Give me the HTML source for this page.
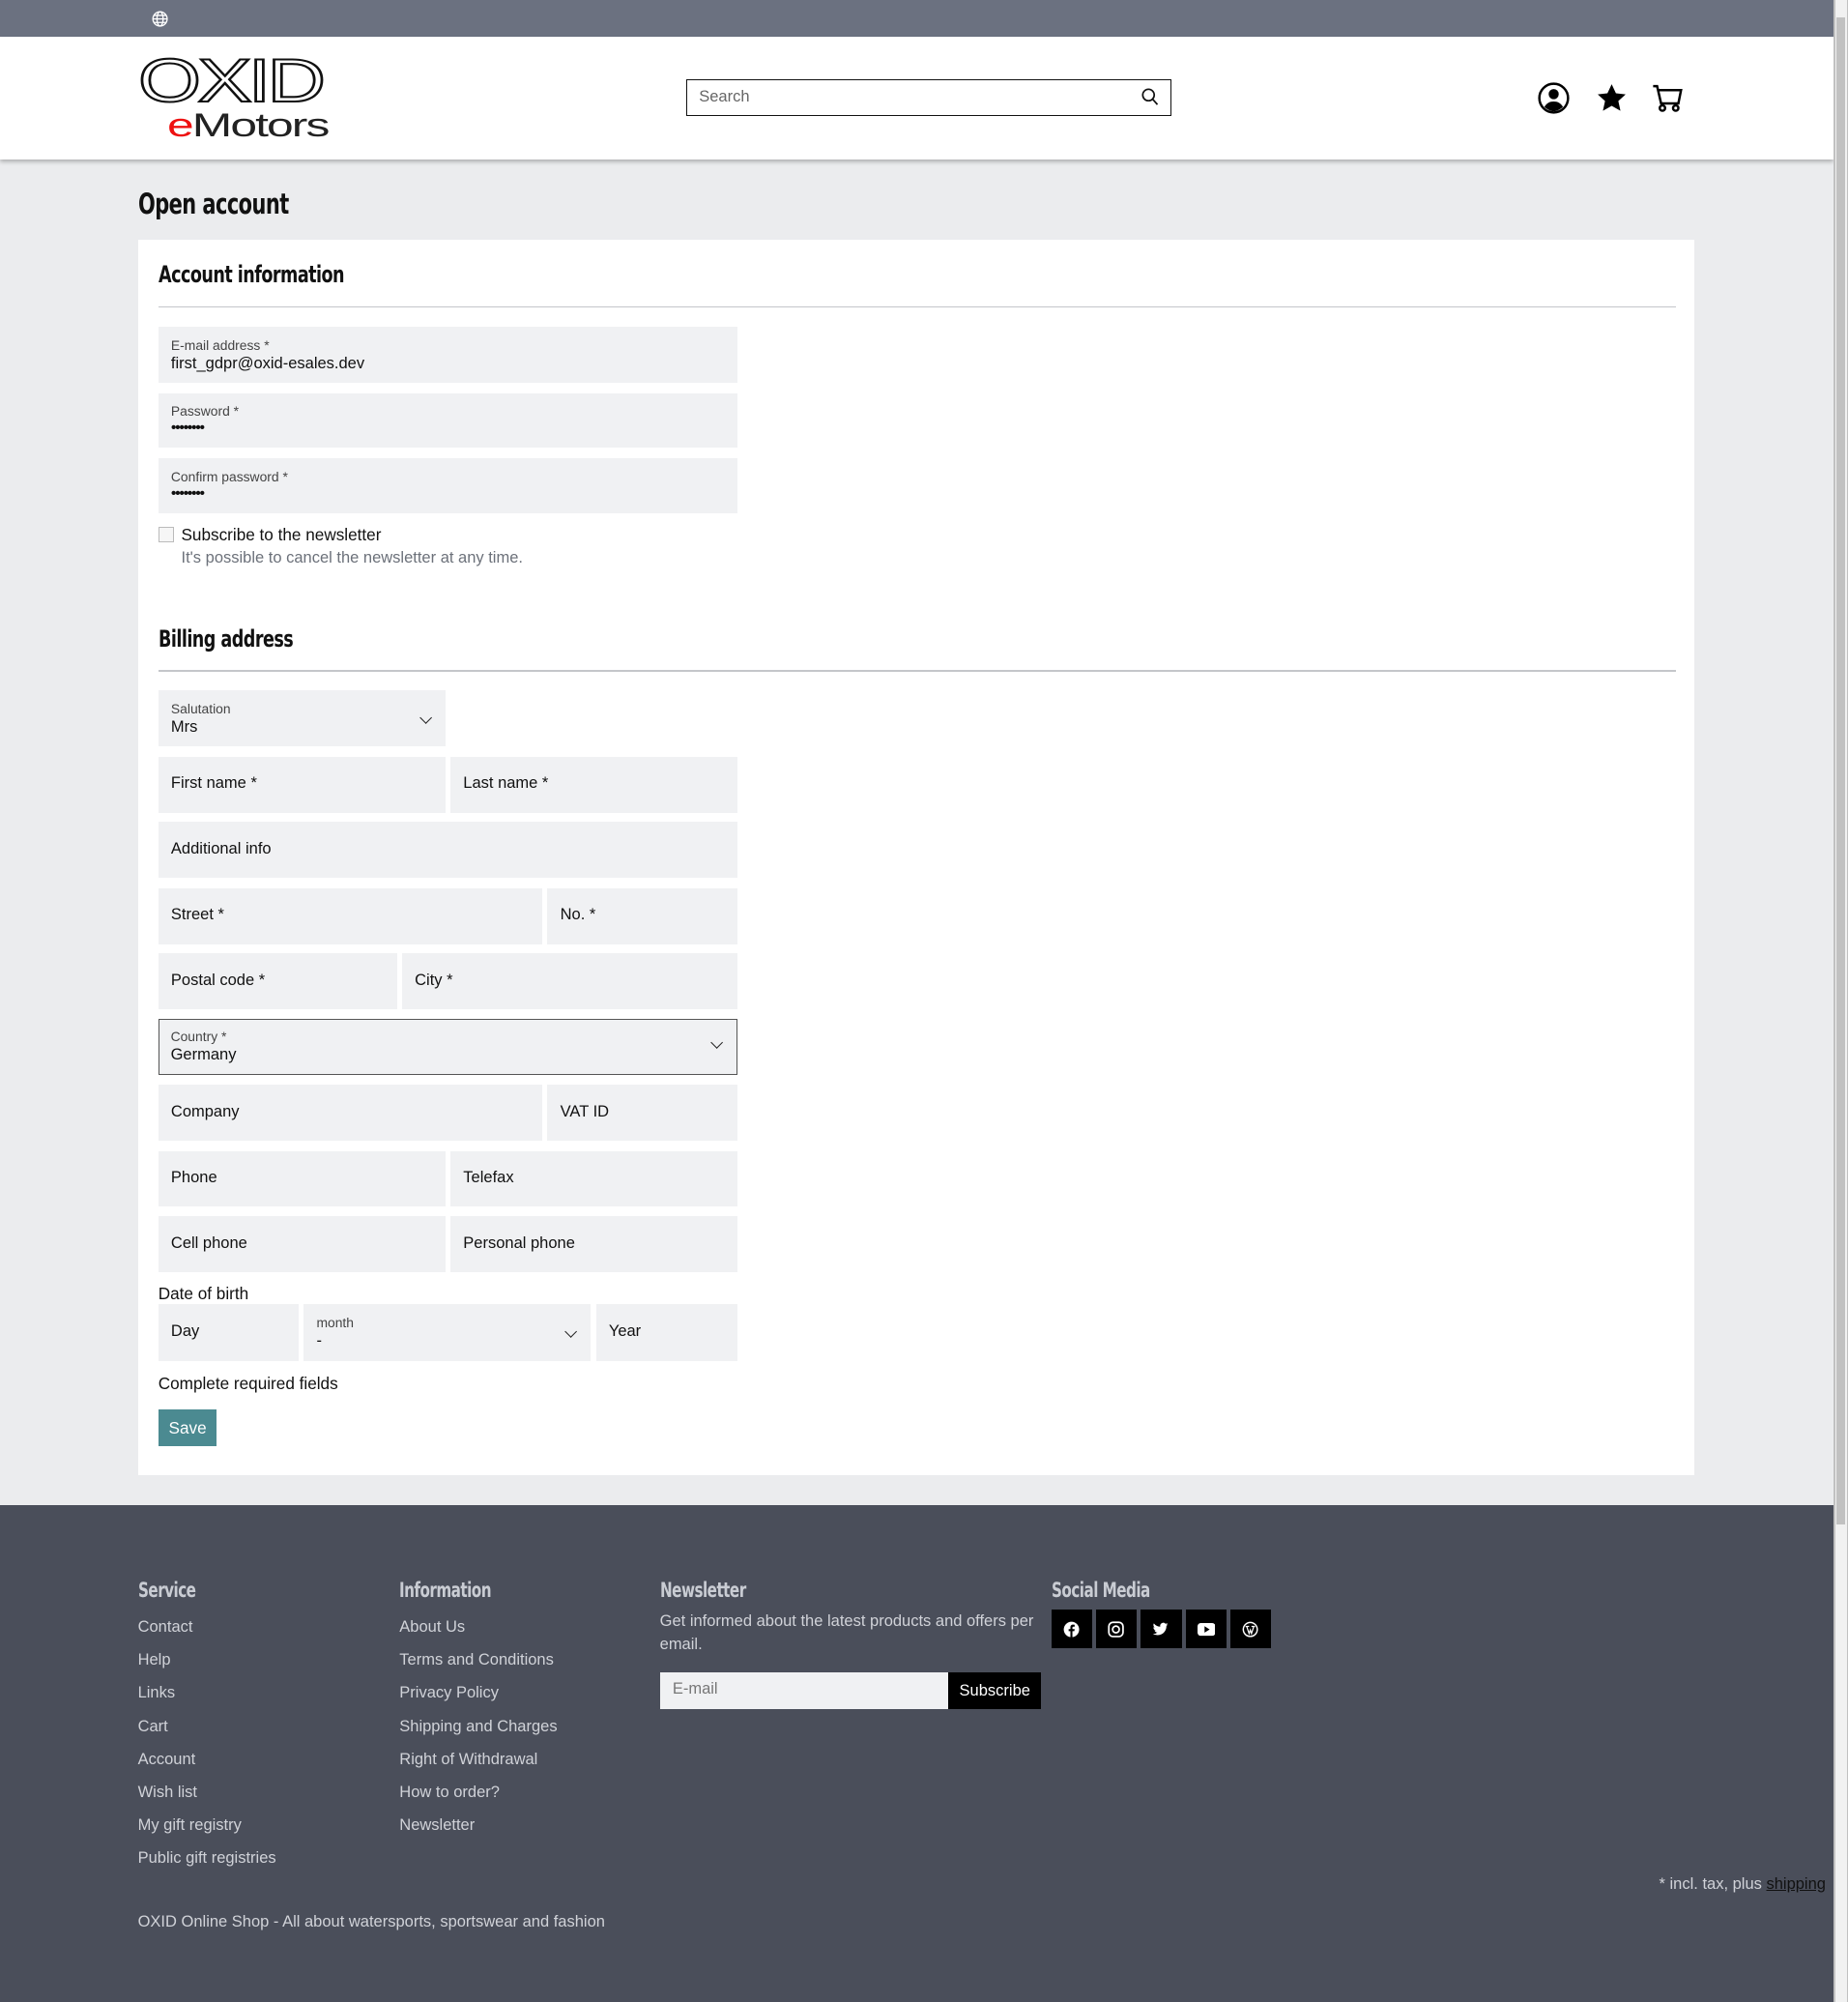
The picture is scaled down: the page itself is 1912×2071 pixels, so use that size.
<!DOCTYPE html>
<html><head><meta charset="utf-8">
<style>
*{box-sizing:border-box;margin:0;padding:0}
html,body{width:1912px;height:2071px;overflow:hidden;background:#4a4e5a}
#w{zoom:1.3204;width:1448px;height:1569px;position:relative;font-family:"Liberation Sans",sans-serif;font-size:13px;color:#111;background:#ebecee}
.a{position:absolute}
.h{font-family:"DejaVu Sans Condensed","Liberation Sans Narrow","Liberation Sans",sans-serif;font-weight:bold;letter-spacing:-0.5px;transform:scaleX(0.8);transform-origin:left;white-space:nowrap}
.f{position:absolute;background:#f0f1f3;}
.f .l{position:absolute;left:10px;top:8px;font-size:10.5px;color:#444}
.f .v{position:absolute;left:10px;top:22px;font-size:12.5px;color:#111}
.f .d{position:absolute;left:10px;top:21px;font-size:12px;color:#111;letter-spacing:-1px}
.f .p{position:absolute;left:10px;top:14px;font-size:12.5px;color:#111}
.chev{position:absolute;right:12px;top:18px;width:7px;height:7px;border-right:1.3px solid #222;border-bottom:1.3px solid #222;transform:rotate(45deg)}
.ft{color:#d0d2d8;font-size:12.5px}
.fh{color:#c9ccd3;font-size:16px}
.soc{position:absolute;top:1261px;width:32px;height:30px;background:#000}
</style></head><body><div id="w">
<div class="a" style="left:0;top:0;width:1448px;height:29px;background:#6b7180"></div>
<svg class="a" style="left:119px;top:8px" width="13" height="13" viewBox="0 0 14 14" fill="none" stroke="#fff" stroke-width="1.1"><circle cx="7" cy="7" r="6"/><ellipse cx="7" cy="7" rx="2.6" ry="6"/><path d="M1 7h12M2 4h10M2 10h10"/></svg>
<div class="a" style="left:0;top:29px;width:1437px;height:96px;background:#fff;box-shadow:0 2px 3px rgba(0,0,0,.25)"></div>
<div class="a" style="left:108px;top:36px;font-family:'Liberation Sans',sans-serif;font-size:48px;letter-spacing:-2px;color:#fff;-webkit-text-stroke:1.6px #111;transform:scaleX(1.32);transform-origin:left">OXID</div>
<div class="a" style="left:131px;top:84px;font-size:26px;letter-spacing:-1px;color:#222;transform:scaleX(1.45);transform-origin:left"><span style="color:#e11">e</span>Motors</div>
<div class="a" style="left:538px;top:62px;width:380px;height:29px;border:1px solid #111;background:#fff"><span class="a" style="left:9px;top:6px;color:#666;font-size:12.5px">Search</span>
<svg class="a" style="right:10px;top:6px" width="13" height="14" viewBox="0 0 13 14" fill="none" stroke="#111" stroke-width="1.3"><circle cx="5.5" cy="5.5" r="4.5"/><path d="M9 9l3.5 4"/></svg></div>
<svg class="a" style="left:1205px;top:64px" width="25" height="25" viewBox="0 0 24 24"><circle cx="12" cy="12" r="10.8" fill="none" stroke="#000" stroke-width="1.8"/><circle cx="12" cy="9" r="3.8"/><path d="M5 18.5c2-3 4-4 7-4s5 1 7 4c-2 2-4.5 3.3-7 3.3s-5-1.3-7-3.3z"/></svg>
<svg class="a" style="left:1250px;top:64px" width="25" height="25" viewBox="0 0 24 24"><path d="M12 1.5l3.2 6.9 7.3.8-5.5 5 1.6 7.3L12 17.8l-6.6 3.7L7 14.2 1.5 9.2l7.3-.8z"/></svg>
<svg class="a" style="left:1294px;top:64px" width="25" height="25" viewBox="0 0 24 24" fill="none" stroke="#000" stroke-width="1.8"><path d="M1 3h3l3 13h13l2-10H5.5"/><circle cx="8" cy="19.5" r="2"/><circle cx="18" cy="19.5" r="2"/></svg>
<div class="a h" style="left:108px;top:147px;font-size:22px">Open account</div>
<div class="a" style="left:108px;top:188px;width:1220px;height:968px;background:#fff"></div>
<div class="a h" style="left:124px;top:204px;font-size:18.5px">Account information</div>
<div class="a" style="left:124px;top:240px;width:1189px;height:1px;background:#c4c6ca"></div>
<div class="f" style="left:124px;top:256px;width:454px;height:44px"><span class="l">E-mail address *</span><span class="v">first_gdpr@oxid-esales.dev</span></div>
<div class="f" style="left:124px;top:308px;width:454px;height:43px"><span class="l">Password *</span><span class="d">••••••••</span></div>
<div class="f" style="left:124px;top:359px;width:454px;height:43px"><span class="l">Confirm password *</span><span class="d">••••••••</span></div>
<div class="a" style="left:124px;top:413px;width:12px;height:12px;border:1px solid #bbb;background:#f6f6f6"></div>
<div class="a" style="left:142px;top:411px">Subscribe to the newsletter</div>
<div class="a" style="left:142px;top:430px;color:#6c717a;font-size:12.5px">It's possible to cancel the newsletter at any time.</div>
<div class="a h" style="left:124px;top:489px;font-size:18.5px">Billing address</div>
<div class="a" style="left:124px;top:525px;width:1189px;height:1px;background:#c4c6ca"></div>
<div class="f" style="left:124px;top:541px;width:225px;height:44px"><span class="l">Salutation</span><span class="v">Mrs</span><span class="chev"></span></div>
<div class="f" style="left:124px;top:593px;width:225px;height:44px"><span class="p">First name *</span></div>
<div class="f" style="left:353px;top:593px;width:225px;height:44px"><span class="p">Last name *</span></div>
<div class="f" style="left:124px;top:644px;width:454px;height:44px"><span class="p">Additional info</span></div>
<div class="f" style="left:124px;top:696px;width:301px;height:44px"><span class="p">Street *</span></div>
<div class="f" style="left:429px;top:696px;width:149px;height:44px"><span class="p">No. *</span></div>
<div class="f" style="left:124px;top:747px;width:187px;height:44px"><span class="p">Postal code *</span></div>
<div class="f" style="left:315px;top:747px;width:263px;height:44px"><span class="p">City *</span></div>
<div class="f" style="left:124px;top:798px;width:454px;height:44px;border:1px solid #555"><span class="l" style="left:9px;top:7px">Country *</span><span class="v" style="left:9px;top:21px">Germany</span><span class="chev" style="top:15px"></span></div>
<div class="f" style="left:124px;top:850px;width:301px;height:44px"><span class="p">Company</span></div>
<div class="f" style="left:429px;top:850px;width:149px;height:44px"><span class="p">VAT ID</span></div>
<div class="f" style="left:124px;top:902px;width:225px;height:43px"><span class="p">Phone</span></div>
<div class="f" style="left:353px;top:902px;width:225px;height:43px"><span class="p">Telefax</span></div>
<div class="f" style="left:124px;top:953px;width:225px;height:44px"><span class="p">Cell phone</span></div>
<div class="f" style="left:353px;top:953px;width:225px;height:44px"><span class="p">Personal phone</span></div>
<div class="a" style="left:124px;top:1006px">Date of birth</div>
<div class="f" style="left:124px;top:1022px;width:110px;height:44px"><span class="p">Day</span></div>
<div class="f" style="left:238px;top:1022px;width:225px;height:44px"><span class="l">month</span><span class="v">-</span><span class="chev"></span></div>
<div class="f" style="left:467px;top:1022px;width:111px;height:44px"><span class="p">Year</span></div>
<div class="a" style="left:124px;top:1076px">Complete required fields</div>
<div class="a" style="left:124px;top:1104px;width:46px;height:29px;background:#4b8a91;color:#fff;text-align:center;line-height:29px">Save</div>
<div class="a" style="left:0;top:1179px;width:1437px;height:390px;background:#4a4e5a"></div>
<div class="a h fh" style="left:108px;top:1236px">Service</div>
<div class="a h fh" style="left:313px;top:1236px">Information</div>
<div class="a h fh" style="left:517px;top:1236px">Newsletter</div>
<div class="a h fh" style="left:824px;top:1236px">Social Media</div>
<div class="a ft" style="left:108px;top:1262px;line-height:25.8px">Contact<br>Help<br>Links<br>Cart<br>Account<br>Wish list<br>My gift registry<br>Public gift registries</div>
<div class="a ft" style="left:313px;top:1262px;line-height:25.8px">About Us<br>Terms and Conditions<br>Privacy Policy<br>Shipping and Charges<br>Right of Withdrawal<br>How to order?<br>Newsletter</div>
<div class="a ft" style="left:517px;top:1262px;width:295px;line-height:18px">Get informed about the latest products and offers per email.</div>
<div class="a" style="left:517px;top:1310px;width:227px;height:29px;background:#f0f1f3;color:#777;padding:6px 0 0 10px;font-size:12.5px">E-mail</div>
<div class="a" style="left:743px;top:1310px;width:73px;height:29px;background:#000;color:#fff;text-align:center;line-height:29px;font-size:12.5px">Subscribe</div>
<div class="soc" style="left:824px"><svg style="margin:9px" width="13" height="13" viewBox="0 0 14 14"><circle cx="7" cy="7" r="6.5" fill="#fff"/><path d="M7.8 14V8.5h1.6l.3-1.8H7.8V5.6c0-.5.2-.9.9-.9h1V3.1c-.3 0-.8-.1-1.4-.1-1.4 0-2.2.8-2.2 2.3v1.4H4.6v1.8h1.5V14z" fill="#000"/></svg></div>
<div class="soc" style="left:859px"><svg style="margin:9px" width="13" height="13" viewBox="0 0 14 14" fill="none" stroke="#fff" stroke-width="1.4"><rect x="1" y="1" width="12" height="12" rx="3.5"/><circle cx="7" cy="7" r="2.8"/></svg></div>
<div class="soc" style="left:894px"><svg style="margin:9px" width="13" height="13" viewBox="0 0 24 24" fill="#fff"><path d="M23 4.6a9 9 0 0 1-2.6.7 4.6 4.6 0 0 0 2-2.5 9 9 0 0 1-2.9 1.1A4.5 4.5 0 0 0 11.8 8 12.8 12.8 0 0 1 2.5 3.3a4.5 4.5 0 0 0 1.4 6 4.5 4.5 0 0 1-2-.6 4.5 4.5 0 0 0 3.6 4.5 4.5 4.5 0 0 1-2 .1 4.5 4.5 0 0 0 4.2 3.1A9 9 0 0 1 1 18.3 12.8 12.8 0 0 0 7.9 20.3c8.3 0 12.8-6.9 12.8-12.8v-.6A9 9 0 0 0 23 4.6z"/></svg></div>
<div class="soc" style="left:929px"><svg style="margin:9px" width="14" height="13" viewBox="0 0 14 13"><rect x="0" y="1.5" width="14" height="10" rx="2.5" fill="#fff"/><path d="M5.5 4v5l4-2.5z" fill="#000"/></svg></div>
<div class="soc" style="left:964px"><svg style="margin:9px" width="13" height="13" viewBox="0 0 14 14"><circle cx="7" cy="7" r="6.5" fill="#fff"/><circle cx="7" cy="7" r="5.3" fill="#000"/><path d="M3 4.5h3M8 4.5h3M4 4.5l2 6 1-3 1 3 2-6" stroke="#fff" stroke-width="1" fill="none"/></svg></div>
<div class="a" style="left:1300px;top:1469px;color:#d0d2d8;font-size:12.5px;white-space:nowrap">* incl. tax, plus <span style="color:#111;text-decoration:underline">shipping</span></div>
<div class="a ft" style="left:108px;top:1499px">OXID Online Shop - All about watersports, sportswear and fashion</div>
<div class="a" style="left:1437px;top:0;width:11px;height:1569px;background:#c1c1c1"></div>
<div class="a" style="left:1438px;top:0;width:9px;height:1569px;background:#f1f1f1"></div>
<div class="a" style="left:1439px;top:14px;width:7px;height:1180px;background:#c1c1c1"></div>
</div></body></html>
